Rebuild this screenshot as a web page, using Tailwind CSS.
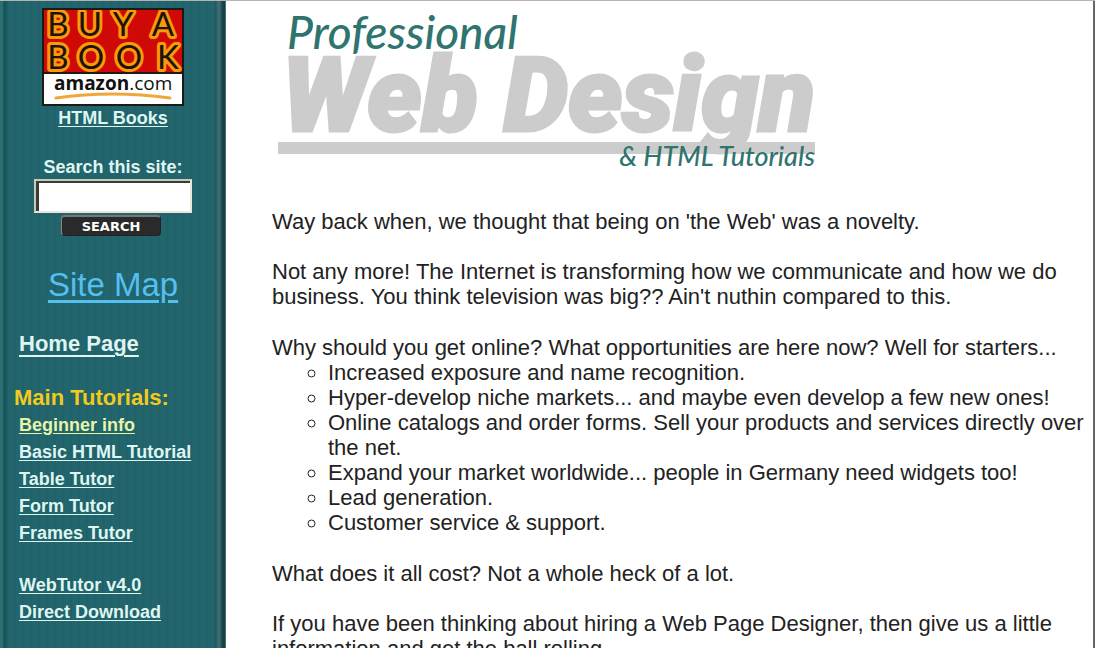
<!DOCTYPE html>
<html lang="en">
<head>
<meta charset="utf-8">
<title>Professional Web Design &amp; HTML Tutorials</title>
<script src="https://cdn.jsdelivr.net/npm/@tailwindcss/browser@4"></script>
</head>
<body class="flex h-screen overflow-hidden border-t border-[#b5b5b5] bg-white font-['Liberation_Sans',Arial,sans-serif]">
  <aside class="w-[226px] shrink-0 bg-[linear-gradient(90deg,#2f7073_0,#2a6b6f_3px,#124f55_4px,#1d5e65_7px,transparent_8px,transparent_214px,#1b5b61_216px,#456c70_218px,#3f686c_220px,#17484e_222px,#123c42_225px,#8aa4a7_226px),repeating-linear-gradient(90deg,#22656c_0,#22656c_6px,#1f5f66_7px,#22656c_8px)] pb-4">
    <div class="flex flex-col items-center pt-[7px] text-lg/6 font-bold text-[#dff5f2]">
      <a href="#books" class="block">
        <svg class="block h-[98px] w-[142px]" viewBox="0 0 142 98" role="img" aria-label="Buy a book at amazon.com">
          <rect width="142" height="98" rx="1" fill="#1b1a16"/>
          <rect x="2" y="2" width="138" height="62" fill="#cf0a06"/>
          <rect x="2" y="66" width="138" height="30" fill="#fff"/>
          <g font-family="Lato, sans-serif" font-size="33" font-weight="400" fill="#1d1307" stroke="#fa9a0a" stroke-width="6" stroke-linejoin="round" paint-order="stroke" text-anchor="middle">
            <text x="16" y="28">B</text><text x="48" y="28">U</text><text x="81" y="28">Y</text><text x="121" y="28">A</text>
            <text x="16" y="61">B</text><text x="49" y="61">O</text><text x="87" y="61">O</text><text x="126" y="61">K</text>
          </g>
          <path d="M1 0V98M141 0V98M0 1H142M0 65H142" stroke="#1b1a16" stroke-width="2"/>
          <text x="12" y="82" font-family="'Open Sans', sans-serif" font-size="19" font-weight="400" fill="#111"><tspan font-weight="700">amazon</tspan>.com</text>
          <path d="M14 90Q70 82 128 90" fill="none" stroke="#f0a63a" stroke-width="3" stroke-linecap="round"/>
        </svg>
      </a>
      <a href="#books" class="underline underline-offset-2">HTML Books</a>
      <form class="mt-[25px] flex flex-col items-center" onsubmit="return false">
        <label for="q" class="font-bold">Search this site:</label>
        <input id="q" type="text" class="h-[34px] w-[158px] border-2 border-t-[#c9ccb4] border-r-[#ebe6da] border-b-[#ebe6da] border-l-[#c9ccb4] bg-white px-1 text-base font-normal text-black inset-shadow-[3px_2px_0_#3d3a3b] outline-none">
        <button class="mt-[2px] mr-1 flex h-[21px] w-[100px] items-center justify-center rounded-[4px] border border-t-2 border-[#222] border-t-[#777] border-l-[#888] bg-[#2a2a2a] font-['DejaVu_Sans',sans-serif] text-[13px] leading-none text-white">SEARCH</button>
      </form>
      <a href="#map" class="mt-[30px] text-[33px]/[38px] font-normal text-[#55bff2] underline underline-offset-4">Site Map</a>
    </div>
    <nav class="mt-[27px] pl-[19px] text-lg/[26px] font-bold text-[#dff5f2]">
      <a href="#home" class="block text-[22px]/[26px] underline underline-offset-4">Home Page</a>
      <h2 class="mt-[27px] -ml-[5px] text-[22px]/[28px] text-[#f0cb1c]">Main Tutorials:</h2>
      <ul class="leading-[27px]">
        <li><a href="#b" class="text-[#e6f5a8] underline underline-offset-2">Beginner info</a></li>
        <li><a href="#h" class="underline underline-offset-2">Basic HTML Tutorial</a></li>
        <li><a href="#t" class="underline underline-offset-2">Table Tutor</a></li>
        <li><a href="#f" class="underline underline-offset-2">Form Tutor</a></li>
        <li><a href="#r" class="underline underline-offset-2">Frames Tutor</a></li>
      </ul>
      <ul class="mt-[25px] leading-[27px]">
        <li><a href="#w" class="underline underline-offset-2">WebTutor v4.0</a></li>
        <li><a href="#d" class="underline underline-offset-2">Direct Download</a></li>
      </ul>
    </nav>
  </aside>
  <main class="min-w-0 flex-1 border-r-2 border-[#666] pr-[6px] pl-[46px] text-[22px]/[25px] text-[#222]">
    <h1 class="pl-[6px]">
      <svg class="block h-[183px] w-[540px]" viewBox="0 0 540 183" role="img" aria-label="Professional Web Design &amp; HTML Tutorials">
        <rect y="141" width="537" height="12" fill="#cbcccb"/>
        <g font-family="Lato, sans-serif" font-style="italic" fill="#2f746f">
          <text x="4" y="130" font-size="103" font-family="Roboto, sans-serif" font-weight="900" fill="#cbcccb" stroke="#cbcccb" stroke-width="3">Web Design</text>
          <text x="9" y="48" font-size="46" font-weight="500">Professional</text>
          <text x="537" y="165" font-size="27" font-weight="500" text-anchor="end">&amp; HTML Tutorials</text>
        </g>
      </svg>
    </h1>
    <p class="mt-[25px]">Way back when, we thought that being on 'the Web' was a novelty.</p>
    <p class="mt-[25px]">Not any more! The Internet is transforming how we communicate and how we do business. You think television was big?? Ain't nuthin compared to this.</p>
    <p class="mt-[26px]">Why should you get online? What opportunities are here now? Well for starters...</p>
    <ul class="list-[circle] pl-14">
      <li>Increased exposure and name recognition.</li>
      <li>Hyper-develop niche markets... and maybe even develop a few new ones!</li>
      <li>Online catalogs and order forms. Sell your products and services directly over the net.</li>
      <li>Expand your market worldwide... people in Germany need widgets too!</li>
      <li>Lead generation.</li>
      <li>Customer service &amp; support.</li>
    </ul>
    <p class="mt-[26px]">What does it all cost? Not a whole heck of a lot.</p>
    <p class="mt-[25px]">If you have been thinking about hiring a Web Page Designer, then give us a little information and get the ball rolling.</p>
  </main>
</body>
</html>
